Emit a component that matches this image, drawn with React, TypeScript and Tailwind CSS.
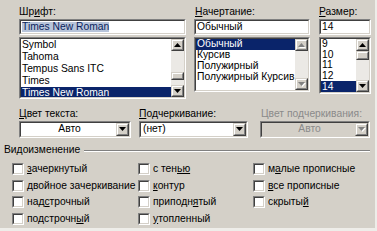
import type { ReactNode } from 'react'

// classic 3D frames, built from two nested 1px borders
function Sunken({ className = '', innerClass = '', children }: { className?: string; innerClass?: string; children?: ReactNode }) {
  return (
    <div className={`border border-t-[#808080] border-l-[#808080] border-b-white border-r-white ${className}`}>
      <div className={`h-full w-full border border-t-[#404040] border-l-[#404040] border-b-[#d4d0c8] border-r-[#d4d0c8] ${innerClass}`}>
        {children}
      </div>
    </div>
  )
}

function Raised({ className = '', children }: { className?: string; children?: ReactNode }) {
  return (
    <div className={`border border-t-[#d4d0c8] border-l-[#d4d0c8] border-b-[#404040] border-r-[#404040] bg-[#d4d0c8] ${className}`}>
      <div className="flex h-full w-full items-center justify-center border border-t-white border-l-white border-b-[#808080] border-r-[#808080]">
        {children}
      </div>
    </div>
  )
}

function Arrow({ dir, disabled = false }: { dir: 'up' | 'down'; disabled?: boolean }) {
  const pts = dir === 'up' ? '3.5,0 7,4 0,4' : '0,0 7,0 3.5,4'
  return (
    <svg width="8" height="5" viewBox="0 0 8 5" className="block">
      {disabled && <polygon points={pts} fill="#ffffff" transform="translate(1,1)" />}
      <polygon points={pts} fill={disabled ? '#808080' : '#000000'} />
    </svg>
  )
}

function ScrollBar({ thumbTop, thumbH, disabled = false }: { thumbTop: number; thumbH: number; disabled?: boolean }) {
  return (
    <div className="flex h-full w-[13px] shrink-0 flex-col">
      <Raised className="h-[12px] w-[13px] shrink-0">
        <Arrow dir="up" disabled={disabled} />
      </Raised>
      <div className="flex flex-1 flex-col bg-[#ebe9e5]">
        {!disabled && (
          <>
            <div style={{ height: thumbTop }} />
            <Raised className="w-[13px]">
              <div style={{ height: thumbH - 4 }} />
            </Raised>
          </>
        )}
      </div>
      <Raised className="h-[12px] w-[13px] shrink-0">
        <Arrow dir="down" disabled={disabled} />
      </Raised>
    </div>
  )
}

function ListBox({
  height,
  rowH,
  items,
  selected,
  thumbTop,
  thumbH,
  disabled,
}: {
  height: number
  rowH: number
  items: string[]
  selected: number
  thumbTop: number
  thumbH: number
  disabled?: boolean
}) {
  return (
    <div style={{ height }}>
      <Sunken className="h-full" innerClass="flex bg-white">
        <div className="flex min-w-0 flex-1 flex-col overflow-hidden">
          {items.map((it, i) => (
            <div
              key={it}
              style={{ height: rowH }}
              className={`flex shrink-0 items-center whitespace-nowrap pl-[1px] leading-none ${
                i === selected ? 'bg-[#0a246a] text-white' : 'text-black'
              }`}
            >
              {it}
            </div>
          ))}
        </div>
        <ScrollBar thumbTop={thumbTop} thumbH={thumbH} disabled={disabled} />
      </Sunken>
    </div>
  )
}

function TextBox({ children }: { children: ReactNode }) {
  return (
    <Sunken className="h-[16px]" innerClass="flex items-center bg-white pl-[1px] leading-none">
      {children}
    </Sunken>
  )
}

function Combo({ value, center = false, disabled = false }: { value: string; center?: boolean; disabled?: boolean }) {
  return (
    <Sunken className="h-[17px]" innerClass={`flex ${disabled ? 'bg-[#d4d0c8]' : 'bg-white'}`}>
      <div
        className={`flex flex-1 items-center pl-[2px] leading-none ${center ? 'justify-center' : ''} ${
          disabled ? 'text-[#8a8a8a]' : ''
        }`}
      >
        {value}
      </div>
      <Raised className="h-full w-[13px] shrink-0">
        <Arrow dir="down" disabled={disabled} />
      </Raised>
    </Sunken>
  )
}

function Check({ children }: { children: ReactNode }) {
  return (
    <div className="flex h-[16.5px] items-center gap-[3px] whitespace-nowrap leading-none">
      <Sunken className="h-[12px] w-[12px] shrink-0" innerClass="bg-white" />
      <span>{children}</span>
    </div>
  )
}

export default function App() {
  return (
    <div className="h-[231px] w-[377px] bg-[#eeede9]">
      <div className="h-[228px] w-[375px] overflow-hidden bg-[#d4d0c8] font-['Liberation_Sans',Arial,sans-serif] text-[10.3px] text-black">
        {/* font / style / size */}
        <div className="flex pl-[19px] pt-[5px]">
          <div className="w-[167px]">
            <div className="h-[14px] leading-[13px]">
              Шр<u>и</u>фт:
            </div>
            <TextBox>
              <span className="bg-[#b7c4da] text-[#0a1f5c]">Times New Roman</span>
            </TextBox>
            <div className="mt-[2px]">
              <ListBox
                height={62}
                rowH={12}
                items={['Symbol', 'Tahoma', 'Tempus Sans ITC', 'Times', 'Times New Roman']}
                selected={4}
                thumbTop={21}
                thumbH={8}
              />
            </div>
          </div>
          <div className="ml-[8px] w-[116px]">
            <div className="h-[14px] pl-[1px] leading-[13px]">
              <u>Н</u>ачертание:
            </div>
            <TextBox>Обычный</TextBox>
            <div className="mt-[2px]">
              <ListBox
                height={55}
                rowH={11}
                items={['Обычный', 'Курсив', 'Полужирный', 'Полужирный Курсив']}
                selected={0}
                thumbTop={0}
                thumbH={8}
                disabled
              />
            </div>
          </div>
          <div className="ml-[9px] w-[52px]">
            <div className="h-[14px] leading-[13px]">
              <u>Р</u>азмер:
            </div>
            <TextBox>14</TextBox>
            <div className="mt-[2px]">
              <ListBox height={57} rowH={10.6} items={['9', '10', '11', '12', '14']} selected={4} thumbTop={0} thumbH={9} />
            </div>
          </div>
        </div>

        {/* colour / underline */}
        <div className="mt-[8px] flex pl-[19px]">
          <div className="w-[112px]">
            <div className="h-[14px] leading-[13px]">
              <u>Ц</u>вет текста:
            </div>
            <Combo value="Авто" center />
          </div>
          <div className="ml-[8px] w-[109px]">
            <div className="h-[14px] leading-[13px]">
              <u>П</u>одчеркивание:
            </div>
            <Combo value="(нет)" />
          </div>
          <div className="ml-[12px] w-[110px]">
            <div className="h-[14px] pl-[1px] leading-[13px] text-[#8a8a8a]">Цвет подчеркивания:</div>
            <Combo value="Авто" center disabled />
          </div>
        </div>

        {/* effects */}
        <div className="mt-[6px] flex h-[13px] items-center pl-[4px] pr-[5px] leading-none">
          <span>Видоизменение</span>
          <div className="ml-[4px] flex-1 border-t border-b border-t-[#808080] border-b-white" />
        </div>
        <div className="mt-[4px] grid grid-cols-[126px_115px_1fr] pl-[12px]">
          <div>
            <Check>
              <u>з</u>ачеркнутый
            </Check>
            <Check>двойное зачеркивание</Check>
            <Check>
              над<u>с</u>трочный
            </Check>
            <Check>
              подстрочн<u>ы</u>й
            </Check>
          </div>
          <div>
            <Check>
              с тен<u>ью</u>
            </Check>
            <Check>
              <u>к</u>онтур
            </Check>
            <Check>
              приподн<u>я</u>тый
            </Check>
            <Check>
              <u>у</u>топленный
            </Check>
          </div>
          <div>
            <Check>
              м<u>а</u>лые прописные
            </Check>
            <Check>
              <u>в</u>се прописные
            </Check>
            <Check>
              скрыты<u>й</u>
            </Check>
          </div>
        </div>
      </div>
    </div>
  )
}
